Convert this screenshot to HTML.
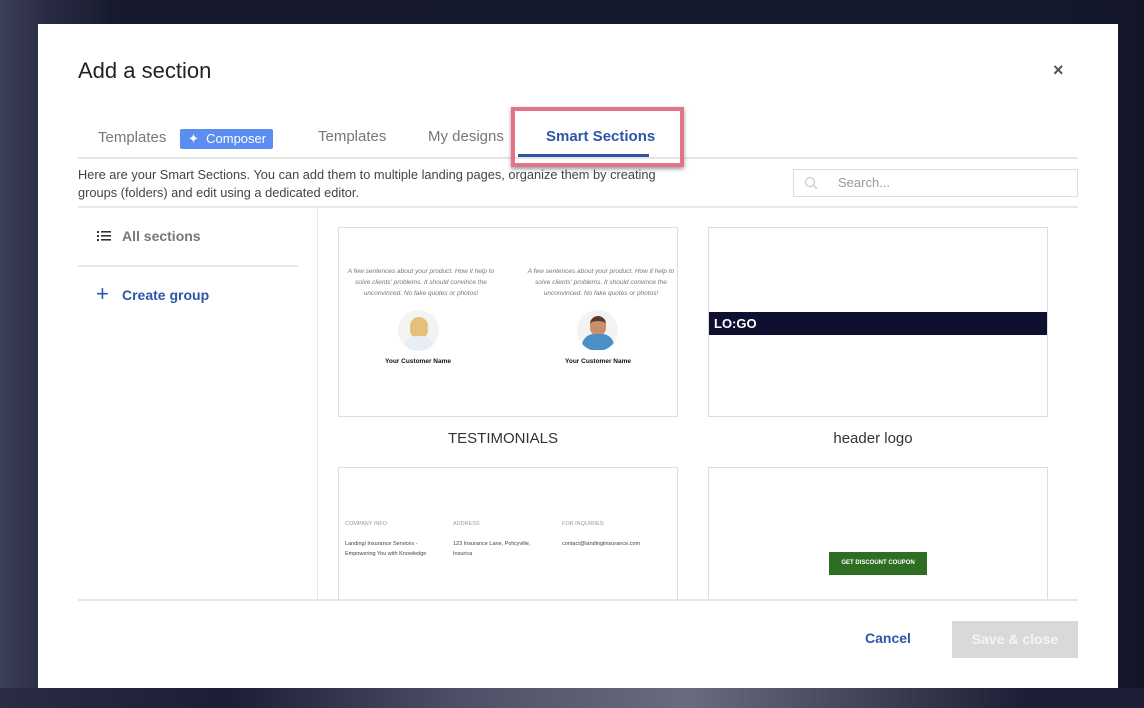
<!DOCTYPE html>
<html><head><meta charset="utf-8"><style>
*{margin:0;padding:0;box-sizing:border-box}
body{width:1144px;height:708px;overflow:hidden;font-family:"Liberation Sans",Arial,sans-serif;background:#1a1c30;position:relative}
.bg{position:absolute;inset:0;background:linear-gradient(90deg,#3c3f58 0,#2a2c44 4%,#171a2e 10%,#161a2e 90%,#13162a 100%)}
.bgb{position:absolute;left:0;right:0;top:688px;height:20px;background:linear-gradient(90deg,#2a2c44,#1b1e34 20%,#4d4f66 40%,#6a6b80 60%,#1b1e34 90%)}
.m{position:absolute;left:38px;top:24px;width:1080px;height:664px;background:#fff}
.a{position:absolute}
.t{font-size:15px;color:#777}
</style></head><body>
<div class="bg"></div><div class="bgb"></div>
<div class="m"></div>
<div class="a" style="left:78px;top:58px;font-size:22px;color:#222">Add a section</div>
<div class="a" style="left:1053px;top:60px;font-size:18px;color:#555;font-weight:bold">×</div>
<div class="a t" style="left:98px;top:129px">Templates</div>
<div class="a" style="left:180px;top:129px;width:93px;height:20px;background:#5b8ef0;border-radius:2px;color:#fff;font-size:13px;line-height:20px;padding-left:8px">✦ &nbsp;Composer</div>
<div class="a t" style="left:318px;top:128px">Templates</div>
<div class="a t" style="left:428px;top:128px">My designs</div>
<div class="a" style="left:78px;top:157px;width:1000px;height:2px;background:#e5e5e5"></div>
<div class="a" style="left:511px;top:107px;width:173px;height:60px;border:4px solid #e57388;box-shadow:0 2px 4px rgba(0,0,0,.4)"></div>
<div class="a" style="left:546px;top:128px;font-size:15px;color:#2d56a8;font-weight:bold">Smart Sections</div>
<div class="a" style="left:518px;top:154px;width:131px;height:3px;background:#2d56a8"></div>
<div class="a" style="left:78px;top:166px;font-size:12.8px;color:#444;line-height:18px;width:600px">Here are your Smart Sections. You can add them to multiple landing pages, organize them by creating groups (folders) and edit using a dedicated editor.</div>
<div class="a" style="left:793px;top:169px;width:285px;height:28px;border:1px solid #ddd"></div>
<svg class="a" style="left:804px;top:176px" width="14" height="14"><circle cx="6" cy="6" r="4.5" fill="none" stroke="#ccc" stroke-width="1.3"/><line x1="9.5" y1="9.5" x2="13" y2="13" stroke="#ccc" stroke-width="1.3"/></svg>
<div class="a" style="left:838px;top:175px;font-size:13px;color:#999">Search...</div>
<div class="a" style="left:78px;top:206px;width:1000px;height:2px;background:#e8e8e8"></div>
<div class="a" style="left:317px;top:208px;width:1px;height:392px;background:#e5e5e5"></div>
<svg class="a" style="left:97px;top:230px" width="14" height="12"><g fill="#333"><rect x="0" y="1" width="2" height="2"/><rect x="4" y="1" width="10" height="1.6"/><rect x="0" y="5" width="2" height="2"/><rect x="4" y="5" width="10" height="1.6"/><rect x="0" y="9" width="2" height="2"/><rect x="4" y="9" width="10" height="1.6"/></g></svg>
<div class="a t" style="left:122px;top:228px;color:#777;font-weight:bold;font-size:14px">All sections</div>
<div class="a" style="left:78px;top:265px;width:220px;height:2px;background:#e8e8e8"></div>
<div class="a" style="left:96px;top:283px;font-size:22px;color:#2d56a8;line-height:22px">+</div>
<div class="a" style="left:122px;top:287px;font-size:14px;color:#2d56a8;font-weight:bold">Create group</div>
<div class="a" style="left:338px;top:227px;width:340px;height:190px;border:1px solid #ddd"></div>
<div class="a" style="left:346px;top:266px;width:150px;text-align:center;font-size:6.5px;font-style:italic;color:#777;line-height:11px">A few sentences about your product. How it help to solve clients' problems. It should convince the unconvinced. No fake quotes or photos!</div>
<div class="a" style="left:526px;top:266px;width:150px;text-align:center;font-size:6.5px;font-style:italic;color:#777;line-height:11px">A few sentences about your product. How it help to solve clients' problems. It should convince the unconvinced. No fake quotes or photos!</div>
<div class="a" style="left:398px;top:310px;width:41px;height:41px;border-radius:50%;background:#f3f3f3;overflow:hidden"><div style="margin:7px auto 0;width:18px;height:22px;border-radius:9px;background:#e6c07a"></div><div style="margin:-3px auto 0;width:30px;height:14px;border-radius:12px 12px 0 0;background:#e8eef5"></div></div>
<div class="a" style="left:577px;top:310px;width:41px;height:41px;border-radius:50%;background:#f3f3f3;overflow:hidden"><div style="margin:6px auto 0;width:16px;height:20px;border-radius:8px;background:#c98e6e;border-top:5px solid #5a3a24"></div><div style="margin:-2px auto 0;width:32px;height:16px;border-radius:12px 12px 0 0;background:#4a90c8"></div></div>
<div class="a" style="left:368px;top:358px;width:100px;text-align:center;font-size:6.5px;font-weight:bold;color:#111">Your Customer Name</div>
<div class="a" style="left:548px;top:358px;width:100px;text-align:center;font-size:6.5px;font-weight:bold;color:#111">Your Customer Name</div>
<div class="a" style="left:338px;top:430px;width:330px;text-align:center;font-size:15px;color:#333">TESTIMONIALS</div>
<div class="a" style="left:708px;top:227px;width:340px;height:190px;border:1px solid #ddd"></div>
<div class="a" style="left:709px;top:312px;width:338px;height:23px;background:#0f0f30;color:#fff;font-weight:bold;font-size:13px;line-height:23px;padding-left:5px">LO:GO</div>
<div class="a" style="left:708px;top:430px;width:330px;text-align:center;font-size:15px;color:#333">header logo</div>
<div class="a" style="left:338px;top:467px;width:340px;height:133px;border:1px solid #ddd;border-bottom:none"></div>
<div class="a" style="left:345px;top:521px;font-size:5.5px;color:#999">COMPANY INFO</div>
<div class="a" style="left:453px;top:521px;font-size:5.5px;color:#999">ADDRESS</div>
<div class="a" style="left:562px;top:521px;font-size:5.5px;color:#999">FOR INQUIRIES:</div>
<div class="a" style="left:345px;top:539px;font-size:5.5px;color:#444;line-height:10px">Landingi Insurance Services -<br>Empowering You with Knowledge</div>
<div class="a" style="left:453px;top:539px;font-size:5.5px;color:#444;line-height:10px">123 Insurance Lane, Policyville,<br>Insurica</div>
<div class="a" style="left:562px;top:539px;font-size:5.5px;color:#444;line-height:10px">contact@landingiinsurance.com</div>
<div class="a" style="left:708px;top:467px;width:340px;height:133px;border:1px solid #ddd;border-bottom:none"></div>
<div class="a" style="left:829px;top:552px;width:98px;height:23px;background:#2e6e22;color:#fff;font-size:6px;font-weight:bold;text-align:center;line-height:23px">GET DISCOUNT COUPON</div>
<div class="a" style="left:78px;top:599px;width:1000px;height:2px;background:#e8e8e8"></div>
<div class="a" style="left:865px;top:630px;font-size:14px;color:#2d56a8;font-weight:bold">Cancel</div>
<div class="a" style="left:952px;top:621px;width:126px;height:37px;background:#d9d9d9;color:#f4f4f4;font-size:14px;font-weight:bold;text-align:center;line-height:37px">Save &amp; close</div>
</body></html>
